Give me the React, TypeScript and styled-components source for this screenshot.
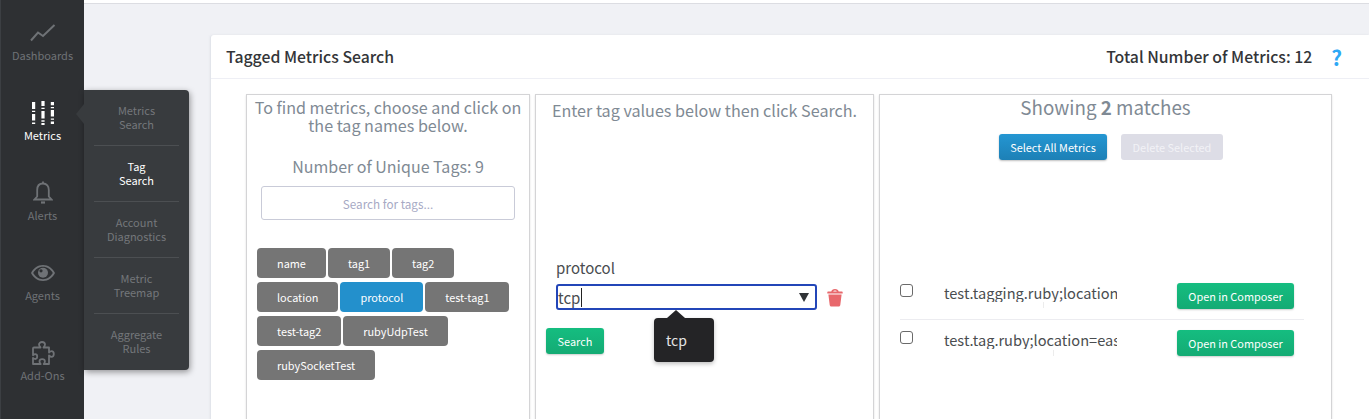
import styled, { createGlobalStyle } from "styled-components";

const GlobalStyle = createGlobalStyle`
  html, body {
    margin: 0;
    padding: 0;
    height: 100%;
    overflow: hidden;
    background: #f0f1f5;
    font-family: "Noto Sans CJK SC", "Noto Sans", sans-serif;
  }
  * { box-sizing: border-box; }
`;

const navItems = [
  {
    name: "Dashboards",
    icon: (
      <svg width="26" height="18" viewBox="0 0 26 18" fill="none" stroke="currentColor" strokeWidth="2">
        <path d="M1 16.5 L8 8.5 L13 12 L24.5 1" />
      </svg>
    ),
  },
  {
    name: "Metrics",
    active: true,
    icon: (
      <svg width="22" height="24" viewBox="0 0 22 24" fill="currentColor">
        <path d="M0 1h3.200v7H0zM0 9.800h3.200v1.200H0zM0 13h3.200v6.500H0zM0 21.500h3.200V23H0z" />
        <path d="M9.400 0h3.200v5H9.400zM9.400 6.800h3.200V8H9.400zM9.400 10h3.200v7.500H9.400zM9.400 19.300h3.200v1.400H9.400zM9.400 22h3.200v2H9.400z" />
        <path d="M18.800 1h3.200v3.200h-3.200zM18.800 6h3.200v1.200h-3.200zM18.800 9h3.200v6.500h-3.200zM18.800 17.500h3.200v1.300h-3.200zM18.800 20.500h3.200V23h-3.200z" />
      </svg>
    ),
  },
  {
    name: "Alerts",
    icon: (
      <svg width="20" height="24" viewBox="0 0 20 24" fill="none" stroke="currentColor" strokeWidth="1.800">
        <path d="M10 2.500c-3.800 0-5.800 2.800-5.800 6.500v6.500L1.500 18.500h17l-2.700-3V9c0-3.700-2-6.500-5.800-6.500z" />
        <path d="M10 0.500v2" />
        <path d="M8 21.500h4" strokeWidth="2.200" />
      </svg>
    ),
  },
  {
    name: "Agents",
    icon: (
      <svg width="24" height="16" viewBox="0 0 24 16">
        <path fill="currentColor" fillRule="evenodd" d="M12 0C6.500 0 2.400 3.500 0 8c2.400 4.500 6.500 8 12 8s9.600-3.500 12-8c-2.400-4.500-6.500-8-12-8zm0 1.800c4.200 0 7.600 2.500 9.800 6.200-2.200 3.700-5.600 6.200-9.800 6.200S4.400 11.700 2.200 8C4.400 4.300 7.800 1.800 12 1.800z" />
        <circle cx="12" cy="7.800" r="5" fill="currentColor" />
        <circle cx="10" cy="5.800" r="1.600" fill="#2e3033" />
      </svg>
    ),
  },
  {
    name: "Add-Ons",
    icon: (
      <svg width="25" height="25" viewBox="0 0 25 25" fill="none" stroke="currentColor" strokeWidth="1.800" strokeLinejoin="round">
        <path d="M4 6.500h6.500c-1-1-1.500-2-1.500-2.900C9 2 10.500 1 12 1s3 1 3 2.600c0 .9-.5 1.900-1.500 2.900H19v5c1-1 1.800-1.300 2.500-1.300 1.300 0 2.300 1.200 2.300 2.800s-1 2.800-2.300 2.800c-.7 0-1.500-.3-2.500-1.300V23h-5.300c.8-1 1.200-1.800 1.200-2.600 0-1.300-1.300-2.200-2.700-2.200s-2.700.9-2.700 2.200c0 .8.400 1.600 1.200 2.600H3v-6c1 .7 1.600 1 2.200 1 1.200 0 2-1 2-2.400s-.8-2.400-2-2.400c-.6 0-1.200.3-2.200 1V7.500c0-.6.400-1 1-1z" />
      </svg>
    ),
  },
];

const subItems = [
  { lines: ["Metrics", "Search"] },
  { lines: ["Tag", "Search"], active: true },
  { lines: ["Account", "Diagnostics"] },
  { lines: ["Metric", "Treemap"] },
  { lines: ["Aggregate", "Rules"] },
];

const tagRows = [
  ["name", "tag1", "tag2"],
  ["location", "protocol", "test-tag1"],
  ["test-tag2", "rubyUdpTest"],
  ["rubySocketTest"],
];

const metrics = [
  { name: "test.tagging.ruby;location=east", tickLeft: 143, tickTop: 22 },
  { name: "test.tag.ruby;location=east;protocol", tickLeft: 153, tickTop: 30 },
];

const App = () => {
  return (
    <Page>
      <GlobalStyle />
      <Sidebar>
        {navItems.map((item) => (
          <NavItem key={item.name} $active={item.active}>
            <NavIcon>{item.icon}</NavIcon>
            <NavLabel>{item.name}</NavLabel>
          </NavItem>
        ))}
        <Flyout>
          <FlyoutArrow />
          {subItems.map((sub) => (
            <FlyoutItem key={sub.lines[0]} $active={sub.active}>
              {sub.lines[0]}
              <br />
              {sub.lines[1]}
            </FlyoutItem>
          ))}
        </Flyout>
      </Sidebar>

      <Main>
        <TopBar />
        <Card>
          <CardHeader>
            <CardTitle>Tagged Metrics Search</CardTitle>
            <HeaderRight>
              <CardTitle>Total Number of Metrics: 12</CardTitle>
              <Help>?</Help>
            </HeaderRight>
          </CardHeader>

          <Columns>
            <Column>
              <TagsIntro>To find metrics, choose and click on the tag names below.</TagsIntro>
              <TagCount>Number of Unique Tags: 9</TagCount>
              <TagSearch placeholder="Search for tags..." />
              <TagList>
                {tagRows.map((row) => (
                  <TagRow key={row[0]}>
                    {row.map((tag) => (
                      <Tag key={tag} $selected={tag === "protocol"}>
                        {tag}
                      </Tag>
                    ))}
                  </TagRow>
                ))}
              </TagList>
            </Column>

            <Column>
              <ValuesIntro>Enter tag values below then click Search.</ValuesIntro>
              <FieldLabel>protocol</FieldLabel>
              <FieldRow>
                <Combo>
                  <ComboText>tcp</ComboText>
                  <Caret />
                  <Tooltip>tcp</Tooltip>
                </Combo>
                <svg width="16" height="19" viewBox="0 0 16 18" fill="#e8686c">
                  <path d="M8 0.500C5.800 0.500 4.600 1.800 4.300 3H1c-.4 0-.7.3-.7.7V5h15.400V3.700c0-.4-.3-.7-.7-.7h-3.300C11.400 1.800 10.200 0.500 8 0.500zM8 2c.8 0 1.500.4 1.900 1H6.100C6.500 2.400 7.200 2 8 2z" />
                  <path d="M1.400 6h13.200l-1.300 10.500c-.1.900-.8 1.500-1.600 1.500H4.300c-.8 0-1.500-.6-1.600-1.500z" />
                </svg>
              </FieldRow>
              <SearchButton>Search</SearchButton>
            </Column>

            <Column>
              <Showing>
                Showing <strong>2</strong> matches
              </Showing>
              <Actions>
                <SelectAll>Select All Metrics</SelectAll>
                <DeleteSelected>Delete Selected</DeleteSelected>
              </Actions>
              <MetricList>
                {metrics.map((metric) => (
                  <MetricRow key={metric.name}>
                    <Check type="checkbox" />
                    <MetricName>{metric.name}</MetricName>
                    <Tick $left={metric.tickLeft} $top={metric.tickTop} />
                    <ComposerButton>Open in Composer</ComposerButton>
                  </MetricRow>
                ))}
              </MetricList>
            </Column>
          </Columns>
        </Card>
      </Main>
    </Page>
  );
};

const Page = styled.div`
  display: flex;
  height: 419px;
  overflow: hidden;
`;

const Sidebar = styled.nav`
  position: relative;
  flex: 0 0 84px;
  padding-top: 16px;
  background: #2e3033;
  border-left: 1px solid #3c3f43;
  z-index: 2;
`;

const NavItem = styled.div<{ $active?: boolean }>`
  display: flex;
  flex-direction: column;
  align-items: center;
  height: 80px;
  color: ${(p) => (p.$active ? "#ffffff" : "#6f7276")};
`;

const NavIcon = styled.div`
  display: flex;
  align-items: center;
  justify-content: center;
  height: 30px;
  margin-top: 2px;
`;

const NavLabel = styled.div`
  margin-top: -1px;
  font-size: 11px;
  line-height: 16px;
`;

const Flyout = styled.div`
  position: absolute;
  left: 83px;
  top: 90px;
  width: 105px;
  height: 280px;
  padding: 0 10px;
  background: #383b3e;
  border-radius: 0 4px 4px 0;
  box-shadow: 1px 2px 6px rgba(0, 0, 0, 0.4);
`;

const FlyoutArrow = styled.div`
  position: absolute;
  left: -8px;
  top: 14px;
  width: 0;
  height: 0;
  border-top: 10px solid transparent;
  border-bottom: 10px solid transparent;
  border-right: 8px solid #383b3e;
`;

const FlyoutItem = styled.div<{ $active?: boolean }>`
  height: 56px;
  padding-top: 13px;
  font-size: 11px;
  line-height: 14px;
  text-align: center;
  color: ${(p) => (p.$active ? "#ffffff" : "#74777b")};
  border-bottom: 1px solid #4c4f52;

  &:last-of-type {
    border-bottom: 0;
  }
`;

const Main = styled.main`
  flex: 1;
  min-width: 0;
`;

const TopBar = styled.div`
  height: 4px;
  background: #ffffff;
  border-bottom: 1px solid #dcdde2;
`;

const Card = styled.section`
  margin: 31px 0 0 127px;
  height: 400px;
  background: #ffffff;
  border-radius: 3px 0 0 0;
  box-shadow: -1px 0 2px rgba(180, 184, 200, 0.3);
`;

const CardHeader = styled.header`
  display: flex;
  justify-content: space-between;
  align-items: center;
  height: 44px;
  padding: 0 27px 0 15px;
  border-bottom: 1px solid #eeeff5;
`;

const CardTitle = styled.h2`
  margin: 0;
  font-size: 15.800px;
  font-weight: 500;
  line-height: 24px;
  color: #333538;
`;

const HeaderRight = styled.div`
  display: flex;
  align-items: center;
  gap: 19px;
`;

const Help = styled.span`
  font-size: 21px;
  font-weight: 700;
  line-height: 24px;
  color: #2ea8f5;
`;

const Columns = styled.div`
  display: grid;
  grid-template-columns: 284px 339px 453px;
  column-gap: 5px;
  margin: 15px 0 0 35px;
`;

const Column = styled.div`
  height: 340px;
  background: #ffffff;
  border: 1px solid #d4d4d6;
  box-shadow: 0 1px 2px rgba(0, 0, 0, 0.12);
  border-bottom: 0;
`;

const TagsIntro = styled.p`
  margin: 3px 0 0;
  padding: 0 6px;
  font-size: 16.100px;
  line-height: 18px;
  text-align: center;
  color: #7f8a94;
`;

const TagCount = styled.p`
  margin: 22px 0 0;
  font-size: 16px;
  line-height: 20px;
  text-align: center;
  color: #7f8a94;
`;

const TagSearch = styled.input`
  display: block;
  width: 254px;
  height: 34px;
  margin: 10px 0 0 14px;
  border: 1px solid #c9cbd8;
  border-radius: 3px;
  outline: none;
  font-family: inherit;
  font-size: 11.700px;
  text-align: center;

  &::placeholder {
    color: #a6a9c4;
    opacity: 1;
  }
`;

const TagList = styled.div`
  display: flex;
  flex-direction: column;
  gap: 4px;
  margin: 28px 0 0 10px;
`;

const TagRow = styled.div`
  display: flex;
  gap: 2px;
`;

const Tag = styled.div<{ $selected?: boolean }>`
  height: 30px;
  padding: 0 20px;
  border-radius: 4px;
  font-size: 10.900px;
  font-weight: 400;
  line-height: 30px;
  color: #ffffff;
  background: ${(p) => (p.$selected ? "#2390cc" : "#757575")};
`;

const ValuesIntro = styled.p`
  margin: 5px 0 0;
  font-size: 16.150px;
  line-height: 20px;
  text-align: center;
  color: #7f8a94;
`;

const FieldLabel = styled.div`
  margin: 138px 0 0 20px;
  font-size: 15px;
  line-height: 20px;
  color: #4a4d50;
`;

const FieldRow = styled.div`
  display: flex;
  align-items: center;
  gap: 10px;
  margin: 6px 0 0 20px;
`;

const Combo = styled.div`
  position: relative;
  display: flex;
  align-items: center;
  justify-content: space-between;
  width: 261px;
  height: 26px;
  padding: 0 6px 0 0;
  border: 2px solid #2346b8;
  border-radius: 3px;
`;

const ComboText = styled.span`
  padding-right: 1px;
  border-right: 1px solid #222222;
  font-size: 15px;
  line-height: 19px;
  color: #4a4d50;
`;

const Caret = styled.span`
  width: 0;
  height: 0;
  border-left: 5.500px solid transparent;
  border-right: 5.500px solid transparent;
  border-top: 9px solid #303336;
`;

const Tooltip = styled.div`
  position: absolute;
  left: 96px;
  top: 32px;
  width: 60px;
  height: 44px;
  padding-left: 12px;
  border-radius: 4px;
  font-size: 14px;
  line-height: 44px;
  color: #e4e4e4;
  background: #242426;
  box-shadow: 0 2px 4px rgba(0, 0, 0, 0.25);

  &::before {
    content: "";
    position: absolute;
    left: 13px;
    top: -8px;
    border-left: 9px solid transparent;
    border-right: 9px solid transparent;
    border-bottom: 8px solid #242426;
  }
`;

const GreenButton = styled.button`
  height: 26px;
  padding: 0;
  border: 0;
  border-radius: 3px;
  font-family: inherit;
  font-size: 10.900px;
  font-weight: 400;
  color: #ffffff;
  background: linear-gradient(#15bd80, #14ab74);
  box-shadow: 0 1px 2px rgba(0, 0, 0, 0.2);
`;

const SearchButton = styled(GreenButton)`
  display: block;
  width: 58px;
  margin: 18px 0 0 10px;
`;

const Showing = styled.div`
  margin-top: 0;
  font-size: 18.800px;
  line-height: 24px;
  text-align: center;
  color: #7f8a94;

  strong {
    font-weight: 700;
  }
`;

const Actions = styled.div`
  display: flex;
  justify-content: center;
  gap: 14px;
  margin-top: 15px;
  padding-left: 11px;
`;

const SelectAll = styled.button`
  width: 108px;
  height: 26px;
  padding: 0;
  border: 0;
  border-radius: 3px;
  font-family: inherit;
  font-size: 10.900px;
  font-weight: 400;
  color: #ffffff;
  background: linear-gradient(#2496d2, #1d80b6);
  box-shadow: 0 1px 2px rgba(0, 0, 0, 0.25);
`;

const DeleteSelected = styled.button`
  width: 102px;
  height: 26px;
  padding: 0;
  border: 0;
  border-radius: 3px;
  font-family: inherit;
  font-size: 10.900px;
  font-weight: 400;
  color: #f2f2f6;
  background: #dddde6;
`;

const MetricList = styled.div`
  margin: 120px 0 0 20px;
  width: 404px;
`;

const MetricRow = styled.div`
  position: relative;
  display: flex;
  align-items: flex-start;
  height: 47px;
  padding-top: 10px;
  border-bottom: 1px solid #ececf0;

  &:first-child {
    height: 40px;
    padding-top: 3px;
  }

  &:last-child {
    border-bottom: 0;
  }
`;

const Check = styled.input`
  flex: none;
  width: 13px;
  height: 13px;
  margin: 1px 0 0;
  appearance: none;
  border: 1px solid #6a6a6a;
  border-radius: 3px;
  background: #ffffff;
`;

const MetricName = styled.div`
  flex: none;
  width: 173px;
  margin-left: 31px;
  overflow: hidden;
  white-space: nowrap;
  font-size: 14.600px;
  line-height: 19px;
  color: #4a4d50;
`;

const Tick = styled.span<{ $left: number; $top: number }>`
  position: absolute;
  left: ${(p) => p.$left}px;
  top: ${(p) => p.$top}px;
  width: 1px;
  height: 6px;
  background: #ececec;
`;

const ComposerButton = styled(GreenButton)`
  flex: none;
  width: 117px;
  margin-left: 60px;
`;

export default App;
